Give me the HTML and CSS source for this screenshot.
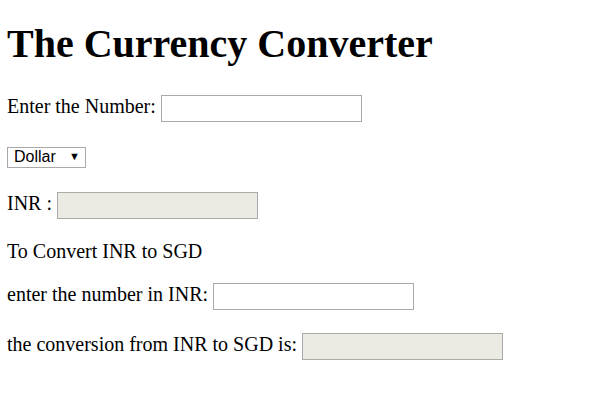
FILE: index.html
```html
<!DOCTYPE html>
<html>
<head>
<meta charset="utf-8">
<link rel="stylesheet" href="styles.css">
</head>
<body>
<h1 class="title">The Currency Converter</h1>
<p class="row row-field">Enter the Number: <input class="field" type="text"></p>
<p class="row row-select"><span class="select"><span class="select-text">Dollar</span><span class="arrow">▼</span></span></p>
<p class="row row-field">INR : <input class="field field-off" type="text" disabled></p>
<p class="row row-text">To Convert INR to SGD</p>
<p class="row row-field">enter the number in INR: <input class="field" type="text"></p>
<p class="row row-field">the conversion from INR to SGD is: <input class="field field-off" type="text" disabled></p>
</body>
</html>
```
FILE: styles.css
```css
html {
  background: #fff;
}
body {
  margin: 0;
  padding: 0 7px;
  font-family: "Liberation Serif", "Times New Roman", serif;
  font-size: 20px;
  line-height: 23px;
  color: #000;
}
.title {
  font-size: 40px;
  line-height: 46px;
  font-weight: bold;
  margin: 20.5px 0 28.5px;
}
.row {
  margin: 20px 0;
}
.row-field {
  height: 30px;
}
.row-select {
  height: 27px;
}
.row-text {
  height: 21px;
  line-height: 18px;
}
.field {
  box-sizing: border-box;
  width: 201px;
  height: 27px;
  border: 1px solid #a9a9a9;
  background: #fff;
  vertical-align: top;
  margin: 0;
  padding: 2px;
}
.field-off {
  background: #ebebe4;
}
.select {
  display: inline-flex;
  align-items: center;
  box-sizing: border-box;
  width: 79px;
  height: 21px;
  margin-top: 2px;
  padding: 0 0 2px 6px;
  border: 1px solid #a9a9a9;
  font-family: "Liberation Sans", Arial, sans-serif;
  font-size: 16px;
  line-height: 17px;
  vertical-align: top;
}
.select-text {
  width: 55px;
}
.arrow {
  font-size: 11px;
  line-height: 11px;
}
```
